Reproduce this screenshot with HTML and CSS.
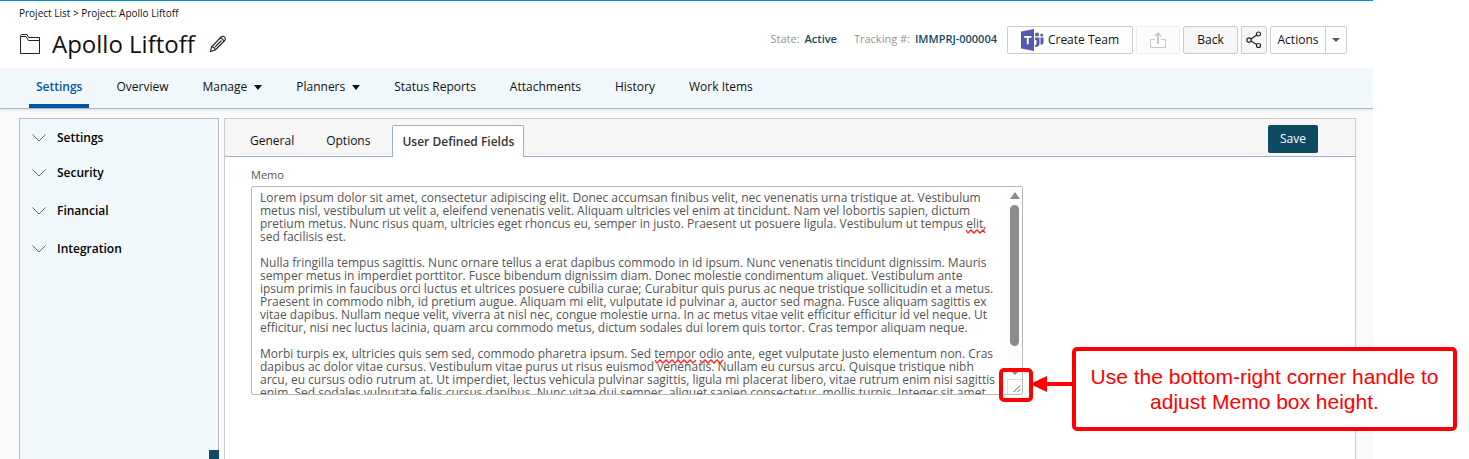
FILE: index.html
```html
<!DOCTYPE html>
<html lang="en">
<head>
    <meta charset="UTF-8">
    <meta name="viewport" content="width=device-width, initial-scale=1.0">
    <title>Apollo Liftoff</title>
    <link rel="stylesheet" href="styles.css">
</head>
<body>

<div class="app">
    <header class="header">
        <div class="heading">
            <div class="breadcrumb"><a href="#">Project List</a> &gt; <a href="#">Project: Apollo Liftoff</a></div>
            <div class="title-row">
                <svg class="folder" width="22" height="22" viewBox="0 0 22 22" fill="none" stroke="#222" stroke-width="1">
                    <path d="M1.500 20.500V2.500L2.500 1.500H8L9.500 4.500H20.500V20.500Z"/>
                    <path d="M2 3.500H7L9.500 7.500H20.500"/>
                </svg>
                <h1>Apollo Liftoff</h1>
                <button class="edit" aria-label="Edit title">
                    <svg width="18" height="18" viewBox="0 0 18 18" fill="none" stroke="#222" stroke-width="1.1">
                        <path d="M1.500 16.500L2.500 12L11.500 2.500C12.700 1.200 14 1 15.300 1.800C16.600 3 16.600 4.500 15.700 5.500L6.300 15L1.500 16.500Z"/>
                        <path d="M2.500 12C4.500 12 6 13 6.300 15M11 3C13 3.500 14.500 4.500 15 6M6 12L12.500 5.500"/>
                    </svg>
                </button>
            </div>
        </div>

        <div class="tools">
            <dl class="facts">
                <dt>State:</dt><dd>Active</dd>
                <dt>Tracking #:</dt><dd>IMMPRJ-000004</dd>
            </dl>
            <div class="buttons">
                <button class="btn team">
                    <svg width="23" height="22" viewBox="0 0 23 22">
                        <path fill="#5558af" d="M0 2.500L13 0V22L0 19.500Z"/>
                        <path fill="#fff" d="M3 7H10.500V8.800H7.700V15.300H5.800V8.800H3Z"/>
                        <circle fill="#5558af" cx="16" cy="5.500" r="2"/>
                        <circle fill="#5558af" cx="20.700" cy="6" r="1.500"/>
                        <path fill="#5558af" d="M14 8.500H18.500V15C18.500 17 16.500 18 14 17.800V15.800H15.500V11H14ZM19.500 8.500H22.500V13.500C22.500 15 21 16 19.500 15.500Z"/>
                    </svg>
                    Create Team
                </button>
                <button class="btn export" disabled aria-label="Export">
                    <svg width="18" height="18" viewBox="0 0 18 18" fill="none" stroke="#c8c8c8">
                        <path d="M6 8.500H1.500V16.500H16.500V8.500H12"/>
                        <path d="M9 13V3" stroke-width="2"/>
                        <path d="M6 5L9 2L12 5" stroke-width="1.500"/>
                    </svg>
                </button>
                <button class="btn back">Back</button>
                <button class="btn share" aria-label="Share">
                    <svg width="16" height="18" viewBox="0 0 16 18" fill="none" stroke="#222" stroke-width="1.200">
                        <circle cx="3" cy="9" r="2.200"/>
                        <circle cx="12.500" cy="3" r="2"/>
                        <circle cx="12.500" cy="14.500" r="2"/>
                        <path d="M5 8L10.700 4M5 10L10.700 13.500"/>
                    </svg>
                </button>
                <div class="split">
                    <button class="btn actions">Actions</button>
                    <button class="btn more" aria-label="More actions"><span class="caret"></span></button>
                </div>
            </div>
        </div>
    </header>

    <nav class="nav">
        <a href="#" class="current">Settings</a>
        <a href="#">Overview</a>
        <a href="#">Manage <span class="caret"></span></a>
        <a href="#">Planners <span class="caret"></span></a>
        <a href="#">Status Reports</a>
        <a href="#">Attachments</a>
        <a href="#">History</a>
        <a href="#">Work Items</a>
    </nav>

    <main class="content">
        <aside class="sidebar">
            <button class="group"><svg width="14" height="8" viewBox="0 0 14 8"><path d="M.5 .5L7 7L13.500 .5"/></svg>Settings</button>
            <button class="group"><svg width="14" height="8" viewBox="0 0 14 8"><path d="M.5 .5L7 7L13.500 .5"/></svg>Security</button>
            <button class="group"><svg width="14" height="8" viewBox="0 0 14 8"><path d="M.5 .5L7 7L13.500 .5"/></svg>Financial</button>
            <button class="group"><svg width="14" height="8" viewBox="0 0 14 8"><path d="M.5 .5L7 7L13.500 .5"/></svg>Integration</button>
            <span class="collapse"></span>
        </aside>

        <section class="panel">
            <div class="tabs">
                <button class="tab">General</button>
                <button class="tab">Options</button>
                <button class="tab active">User Defined Fields</button>
                <button class="save">Save</button>
            </div>

            <div class="fields">
                <label for="memo">Memo</label>
                <div class="memo">
                    <textarea id="memo" spellcheck="false">Lorem ipsum dolor sit amet, consectetur adipiscing elit. Donec accumsan finibus velit, nec venenatis urna tristique at. Vestibulum
metus nisl, vestibulum ut velit a, eleifend venenatis velit. Aliquam ultricies vel enim at tincidunt. Nam vel lobortis sapien, dictum
pretium metus. Nunc risus quam, ultricies eget rhoncus eu, semper in justo. Praesent ut posuere ligula. Vestibulum ut tempus elit,
sed facilisis est.

Nulla fringilla tempus sagittis. Nunc ornare tellus a erat dapibus commodo in id ipsum. Nunc venenatis tincidunt dignissim. Mauris
semper metus in imperdiet porttitor. Fusce bibendum dignissim diam. Donec molestie condimentum aliquet. Vestibulum ante
ipsum primis in faucibus orci luctus et ultrices posuere cubilia curae; Curabitur quis purus ac neque tristique sollicitudin et a metus.
Praesent in commodo nibh, id pretium augue. Aliquam mi elit, vulputate id pulvinar a, auctor sed magna. Fusce aliquam sagittis ex
vitae dapibus. Nullam neque velit, viverra at nisl nec, congue molestie urna. In ac metus vitae velit efficitur efficitur id vel neque. Ut
efficitur, nisi nec luctus lacinia, quam arcu commodo metus, dictum sodales dui lorem quis tortor. Cras tempor aliquam neque.

Morbi turpis ex, ultricies quis sem sed, commodo pharetra ipsum. Sed tempor odio ante, eget vulputate justo elementum non. Cras
dapibus ac dolor vitae cursus. Vestibulum vitae purus ut risus euismod venenatis. Nullam eu cursus arcu. Quisque tristique nibh
arcu, eu cursus odio rutrum at. Ut imperdiet, lectus vehicula pulvinar sagittis, ligula mi placerat libero, vitae rutrum enim nisi sagittis
enim. Sed sodales vulputate felis cursus dapibus. Nunc vitae dui semper, aliquet sapien consectetur, mollis turpis. Integer sit amet</textarea>
                    <svg class="squiggles" width="770" height="207" viewBox="0 0 770 207" fill="none" stroke="#f22" stroke-width="1.300">
                        <path d="M714 43l2 3l3 -3l3 3l3 -3l3 3l3 -3l2 3"/>
                        <path d="M403 173l2 3l3 -3l3 3l3 -3l3 3l3 -3l3 3l3 -3l3 3l3 -3l3 3l3 -3l3 3l3 -3"/>
                        <path d="M448 173l2 3l3 -3l3 3l3 -3l3 3l3 -3l3 3l3 -3"/>
                    </svg>
                    <div class="scrollbar">
                        <span class="up"></span>
                        <span class="thumb"></span>
                        <span class="down"></span>
                        <svg class="grip" width="15" height="15" viewBox="0 0 15 15" fill="none" stroke="#555"><path d="M6 13L13 6M10 13L13 10"/></svg>
                    </div>
                    <span class="highlight"></span>
                    <svg class="arrow" width="43" height="18" viewBox="0 0 43 18"><path fill="#f00" d="M0 9L17 1V7H43V11H17V17Z"/></svg>
                    <div class="callout">Use the bottom-right corner handle to adjust Memo box height.</div>
                </div>
            </div>
        </section>
    </main>
</div>

</body>
</html>
```
FILE: styles.css
```css
* {
    box-sizing: border-box;
}

body {
    margin: 0;
    background-color: #fff;
    color: #111;
    font-family: "Open Sans", sans-serif;
    font-size: 12px;
    line-height: 16px;
    overflow: hidden;
}

a {
    color: inherit;
    text-decoration: none;
}

button {
    font: inherit;
    color: inherit;
    background: none;
    border: none;
    padding: 0;
}

svg {
    display: block;
}

.app {
    display: flex;
    flex-direction: column;
    height: 100vh;
    margin-right: 96px;
    background-color: #fafafa;
}

/* Header */
.header {
    display: flex;
    justify-content: space-between;
    height: 68px;
    padding: 4px 26px 0 19px;
    background-color: #fff;
    border-top: 1px solid #0090d0;
}

.breadcrumb {
    font-size: 10px;
}

.title-row {
    display: flex;
    align-items: center;
    height: 46px;
}

h1 {
    margin: 0 14px 0 11px;
    font-size: 24px;
    font-weight: 400;
    line-height: 32px;
}

.tools {
    display: flex;
    align-items: flex-start;
    gap: 10px;
    padding-top: 21px;
}

.facts {
    display: flex;
    margin: 5px 0 0;
    font-size: 11px;
}

.facts dt {
    color: #949494;
    margin-right: 5px;
}

.facts dd {
    margin: 0;
    color: #0f4a63;
    font-weight: 600;
}

.facts dd + dt {
    margin-left: 17px;
}

.buttons {
    display: flex;
    gap: 3px;
}

.btn {
    display: flex;
    align-items: center;
    justify-content: center;
    height: 28px;
    border: 1px solid #ccc;
    border-radius: 2px;
    background-color: #fff;
}

.team {
    width: 126px;
    gap: 4px;
}

.export {
    width: 44px;
    border-color: #eee;
    background-color: #fcfcfc;
}

.back {
    width: 55px;
    background-color: #f6f6f6;
}

.share {
    width: 26px;
    background-color: #f6f6f6;
}

.split {
    display: flex;
}

.actions {
    width: 56px;
    border-radius: 2px 0 0 2px;
}

.more {
    width: 22px;
    margin-left: -1px;
    border-radius: 0 2px 2px 0;
}

.caret {
    border: 4px solid transparent;
    border-top: 5px solid #111;
    border-bottom: none;
}

.more .caret {
    border-top: 4px solid #555;
}

/* Navigation */
.nav {
    display: flex;
    gap: 20px;
    height: 41px;
    padding-left: 29px;
    background-color: #f0f8fb;
    border-bottom: 1px solid #a4bcc8;
    box-shadow: 0 1px 3px #ddd;
    clip-path: inset(0 0 -4px 0);
}

.nav a {
    display: flex;
    align-items: center;
    gap: 7px;
    height: 40px;
    padding: 2px 7px 0;
    border-bottom: 4px solid transparent;
}

.nav .current {
    color: #0055a5;
    font-weight: 600;
    border-color: #0055a5;
}

/* Content */
.content {
    display: flex;
    flex: 1;
    gap: 5px;
    padding: 9px 17px 0 19px;
}

.sidebar {
    position: relative;
    width: 200px;
    padding: 3px 12px;
    background-color: #f0f8fb;
    border: 1px solid #b8bcc0;
    border-bottom: none;
}

.group {
    display: flex;
    align-items: center;
    gap: 11px;
    height: 32px;
    margin-bottom: 6px;
    font-weight: 600;
    color: #000;
}

.group:first-child {
    margin-bottom: 3px;
}

.group path {
    fill: none;
    stroke: #666;
}

.collapse {
    position: absolute;
    right: -1px;
    bottom: 0;
    width: 10px;
    height: 9px;
    background-color: #0f4a63;
}

.panel {
    flex: 1;
    background-color: #fff;
    border: 1px solid #ccc;
    border-bottom: none;
}

.tabs {
    display: flex;
    align-items: flex-end;
    height: 38px;
    padding: 0 37px 0 15px;
    background-color: #f6f6f6;
    border-bottom: 1px solid #9cb0cc;
}

.tab {
    height: 32px;
    padding: 2px 10px 0;
    margin-right: 12px;
}

.active {
    padding: 0 9px;
    margin: 0 0 -1px;
    border: 1px solid #9cb0cc;
    border-bottom: none;
    border-radius: 2px 2px 0 0;
    background-color: #fff;
    color: #333;
    font-weight: 600;
}

.save {
    width: 50px;
    height: 28px;
    margin: 0 0 3px auto;
    border-radius: 2px;
    background-color: #0f4a63;
    color: #fff;
}

.fields {
    padding: 10px 26px;
}

.fields label {
    display: block;
    margin-bottom: 3px;
    font-size: 11px;
    color: #555;
}

.memo {
    position: relative;
    width: 772px;
    height: 209px;
}

textarea {
    display: block;
    width: 100%;
    height: 100%;
    padding: 4px 8px 0;
    border: 1px solid #b8b8b8;
    border-radius: 2px;
    background-color: #fff;
    color: #555;
    font: 12px/13px "Open Sans", sans-serif;
    white-space: pre;
    overflow: hidden;
    resize: none;
}

.squiggles {
    position: absolute;
    top: 1px;
    left: 1px;
}

.scrollbar {
    position: absolute;
    top: 1px;
    right: 1px;
    bottom: 1px;
    display: flex;
    flex-direction: column;
    align-items: center;
    width: 15px;
    background-color: #fcfcfc;
}

.up {
    margin-top: 5px;
    border: 5px solid transparent;
    border-top: none;
    border-bottom: 7px solid #8b8b8b;
}

.thumb {
    width: 9px;
    height: 141px;
    margin-top: 6px;
    border-radius: 5px;
    background-color: #8b8b8b;
}

.down {
    margin-top: auto;
    border: 4px solid transparent;
    border-top: 4px solid #8b8b8b;
    border-bottom: none;
}

.grip {
    margin-top: 4px;
    border: 1px solid #ddd;
    border-right: none;
    border-bottom: none;
    background-color: #fcfcfc;
}

/* Annotation */
.highlight {
    position: absolute;
    right: -10px;
    bottom: -7px;
    width: 34px;
    height: 34px;
    border: 4px solid #f00;
    border-radius: 5px;
}

.arrow {
    position: absolute;
    left: 779px;
    top: 189px;
}

.callout {
    position: absolute;
    left: 821px;
    top: 161px;
    display: flex;
    align-items: center;
    width: 385px;
    height: 84px;
    padding: 0 8px;
    border: 4px solid #f00;
    border-radius: 5px;
    background-color: #fff;
    color: #f00;
    font: 21px/25px "Liberation Sans", sans-serif;
    text-align: center;
}
```
